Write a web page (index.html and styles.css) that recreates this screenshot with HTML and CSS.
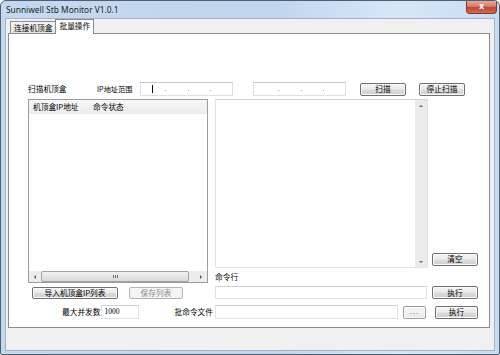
FILE: index.html
```html
<!DOCTYPE html>
<html lang="zh-CN">
<head>
    <meta charset="UTF-8">
    <title>Sunniwell Stb Monitor V1.0.1</title>
    <link rel="stylesheet" href="styles.css">
</head>
<body>

<div class="window">
    <div class="titlebar">
        <span class="title">Sunniwell Stb Monitor V1.0.1</span>
        <div class="close"><span>x</span></div>
    </div>

    <div class="client">
        <div class="tabs">
            <div class="tab">连接机顶盒</div>
            <div class="tab active">批量操作</div>
        </div>

        <div class="panel">
            <!-- 扫描行 -->
            <div class="scan-row">
                <span class="lbl scan-lbl">扫描机顶盒</span>
                <span class="lbl ip-lbl">IP地址范围</span>
                <div class="ip ip-from">
                    <span class="seg"><span class="caret"></span></span><span class="dot"></span>
                    <span class="seg"></span><span class="dot"></span>
                    <span class="seg"></span><span class="dot"></span>
                    <span class="seg"></span>
                </div>
                <div class="ip ip-to">
                    <span class="seg"></span><span class="dot"></span>
                    <span class="seg"></span><span class="dot"></span>
                    <span class="seg"></span><span class="dot"></span>
                    <span class="seg"></span>
                </div>
                <button class="btn btn-scan">扫描</button>
                <button class="btn btn-stop">停止扫描</button>
            </div>

            <div class="work">
                <!-- 机顶盒列表 -->
                <div class="listview">
                    <div class="lv-head">
                        <span class="col-ip">机顶盒IP地址</span>
                        <span class="col-state">命令状态</span>
                    </div>
                    <div class="lv-body"></div>
                    <div class="hscroll">
                        <span class="arrow"><i class="tri-left"></i></span>
                        <span class="thumb"><i class="grip"></i></span>
                        <span class="track"></span>
                        <span class="arrow"><i class="tri-right"></i></span>
                    </div>
                </div>

                <!-- 输出区 -->
                <div class="output">
                    <div class="out-text"></div>
                    <div class="vscroll">
                        <i class="tri-up"></i>
                        <i class="tri-down"></i>
                    </div>
                </div>
                <div class="side-clear">
                    <button class="btn btn-clear">清空</button>
                </div>

                <div class="cmd-lbl lbl">命令行</div>

                <div class="list-btns">
                    <button class="btn btn-import">导入机顶盒IP列表</button>
                    <button class="btn btn-save" disabled>保存列表</button>
                </div>
                <div class="cmd-cell">
                    <div class="field cmd-input"></div>
                </div>
                <div class="side-exec">
                    <button class="btn btn-exec">执行</button>
                </div>

                <div class="conc-cell">
                    <span class="lbl">最大并发数</span>
                    <div class="field conc-input">1000</div>
                    <span class="lbl batch-lbl">批命令文件</span>
                </div>
                <div class="file-cell">
                    <div class="field file-input"></div>
                    <button class="btn btn-browse">...</button>
                </div>
                <div class="side-batch">
                    <button class="btn btn-batch">执行</button>
                </div>
            </div>
        </div>
    </div>
</div>

</body>
</html>
```

FILE: styles.css
```css
body {
    margin: 0;
    padding: 0;
    background-color: #ffffff;
    font-family: "Noto Sans CJK SC", "Noto Sans", sans-serif;
}
.window {
    width: 500px;
    height: 355px;
    box-sizing: border-box;
    border: 1px solid #4f5f72;
    border-radius: 6px 6px 2px 2px;
    padding: 0 4px 3px 4px;
    background: linear-gradient(to right, #c4d9ef 0%, #c0d6ee 55%, #d6e7f8 80%, #c8dcf1 100%);
    overflow: hidden;
}
.titlebar {
    height: 17px;
    display: flex;
    align-items: flex-start;
}
.title {
    font-family: "Noto Sans", sans-serif;
    font-size: 8.4px;
    color: #1e1e1e;
    margin: 3px 0 0 1px;
    line-height: 11px;
}
.close {
    margin-left: auto;
    margin-right: -2px;
    width: 31px;
    height: 13px;
    box-sizing: border-box;
    border: 1px solid #7d3a30;
    border-top: none;
    border-radius: 0 0 4px 4px;
    background: linear-gradient(#e7a99c 0%, #d67a68 45%, #c2432f 55%, #d36a52 100%);
    display: flex;
    justify-content: center;
    align-items: center;
}
.close span {
    font-family: "DejaVu Sans", sans-serif;
    font-weight: bold;
    font-size: 8px;
    line-height: 8px;
    color: #ffffff;
    margin-top: -1px;
}
.client {
    height: 333px;
    box-sizing: border-box;
    border: 1px solid #9fb3ca;
    background-color: #f0f0f0;
}
.tabs {
    display: flex;
    align-items: flex-end;
    height: 14px;
    margin-left: 4px;
}
.tab {
    height: 12px;
    box-sizing: border-box;
    border: 1px solid #898c95;
    border-bottom: none;
    padding: 0 3px;
    font-size: 7.7px;
    line-height: 11px;
    background: linear-gradient(#f4f4f4, #e4e4e4);
    color: #000;
}
.tab.active {
    position: relative;
    z-index: 1;
    height: 15px;
    margin-bottom: -1px;
    margin-left: -1px;
    background: #ffffff;
    line-height: 12px;
}
.panel {
    margin-left: 2px;
    width: 482px;
    height: 295px;
    box-sizing: border-box;
    border: 1px solid #898c95;
    background-color: #ffffff;
    padding: 48px 0 0 19px;
}
.lbl {
    font-size: 7.7px;
    line-height: 10px;
    color: #000;
    white-space: nowrap;
}
.scan-row {
    display: flex;
    align-items: center;
    height: 14px;
}
.scan-lbl {
    width: 69px;
}
.ip-lbl {
    width: 43px;
    font-size: 7.2px;
}
.ip {
    width: 93px;
    height: 14px;
    box-sizing: border-box;
    border: 1px solid #dcdfe3;
    border-top-color: #c4c8cd;
    display: flex;
    align-items: center;
    padding-left: 4px;
}
.ip-from {
    margin-right: 20px;
}
.ip-to {
    margin-right: 14px;
}
.seg {
    width: 21px;
    height: 10px;
    display: flex;
    align-items: center;
}
.caret {
    width: 1px;
    height: 8px;
    margin-left: 7px;
    background-color: #000;
}
.dot {
    width: 1px;
    height: 1px;
    margin: 3px 1px 0 0;
    background-color: #9a9a9a;
}
.btn {
    height: 13px;
    box-sizing: border-box;
    border: 1px solid #707070;
    border-radius: 2px;
    background: linear-gradient(#f3f3f3 0%, #ebebeb 48%, #dcdcdc 52%, #cfcfcf 100%);
    font-family: "Noto Sans CJK SC", sans-serif;
    font-size: 7.7px;
    line-height: 10px;
    color: #000;
    padding: 0;
    box-shadow: inset 0 0 0 1px #fbfbfb;
}
.btn:disabled {
    border-color: #b1b5b9;
    background: #f4f4f4;
    color: #8b8b8b;
    box-shadow: none;
}
.btn-scan {
    width: 46px;
    margin-right: 13px;
}
.btn-stop {
    width: 46px;
}
.work {
    margin-top: 3px;
    display: grid;
    grid-template-columns: 187px 217px 46px;
    grid-template-rows: 169px 15px 19px 20px;
}
.listview {
    grid-column: 1;
    grid-row: 1 / 3;
    width: 180px;
    box-sizing: border-box;
    border: 1px solid #9c9c9c;
    display: flex;
    flex-direction: column;
}
.lv-head {
    height: 14px;
    display: flex;
    align-items: center;
    background: linear-gradient(#f7f7f7, #ececec);
    font-size: 7.7px;
    line-height: 10px;
}
.col-ip {
    width: 60px;
    padding-left: 4px;
}
.lv-body {
    flex: 1;
}
.hscroll {
    height: 11px;
    display: flex;
    background-color: #ececec;
}
.hscroll .arrow {
    width: 12px;
    display: flex;
    align-items: center;
    justify-content: center;
}
.thumb {
    width: 148px;
    box-sizing: border-box;
    border: 1px solid #a3a3a3;
    border-radius: 2px;
    background: linear-gradient(#f1f1f1, #d9d9d9);
    display: flex;
    align-items: center;
    justify-content: center;
}
.track {
    flex: 1;
}
.grip {
    width: 5px;
    height: 3px;
    background: repeating-linear-gradient(to right, #6f6f6f 0 1px, transparent 1px 2px);
}
.tri-left {
    border-right: 2px solid #555;
    border-top: 2px solid transparent;
    border-bottom: 2px solid transparent;
}
.tri-right {
    border-left: 2px solid #555;
    border-top: 2px solid transparent;
    border-bottom: 2px solid transparent;
}
.output {
    grid-column: 2;
    grid-row: 1;
    width: 213px;
    box-sizing: border-box;
    border: 1px solid #e2e3e5;
    border-top-color: #cfd1d4;
    display: flex;
}
.out-text {
    flex: 1;
}
.vscroll {
    width: 12px;
    background-color: #ebebeb;
    display: flex;
    flex-direction: column;
    align-items: center;
    justify-content: space-between;
    padding: 5px 0 4px;
}
.tri-up {
    border-bottom: 2px solid #666;
    border-left: 2px solid transparent;
    border-right: 2px solid transparent;
}
.tri-down {
    border-top: 2px solid #666;
    border-left: 2px solid transparent;
    border-right: 2px solid transparent;
}
.side-clear {
    grid-column: 3;
    grid-row: 1;
    align-self: end;
    margin-bottom: 1px;
}
.btn-clear, .btn-exec {
    width: 46px;
}
.cmd-lbl {
    grid-column: 2;
    grid-row: 2;
    align-self: center;
    margin-top: 2px;
}
.list-btns {
    grid-column: 1;
    grid-row: 3;
    display: flex;
    align-items: center;
    padding-left: 4px;
    gap: 11px;
}
.list-btns .btn {
    height: 12px;
}
.btn-import {
    width: 86px;
}
.btn-save {
    width: 54px;
}
.cmd-cell {
    grid-column: 2;
    grid-row: 3;
    display: flex;
    align-items: center;
}
.field {
    height: 13px;
    box-sizing: border-box;
    border: 1px solid #e0e2e5;
    border-top-color: #cdd0d4;
    background-color: #ffffff;
}
.cmd-input {
    width: 212px;
}
.side-exec {
    grid-column: 3;
    grid-row: 3;
    display: flex;
    align-items: center;
}
.conc-cell {
    grid-column: 1;
    grid-row: 4;
    display: flex;
    align-items: center;
    padding-left: 34px;
    padding-right: 2px;
}
.conc-input {
    width: 38px;
    height: 14px;
    margin-left: 1px;
    font-family: "Liberation Serif", serif;
    font-size: 7.5px;
    line-height: 12px;
    color: #000;
    padding-left: 2px;
}
.batch-lbl {
    margin-left: auto;
}
.file-cell {
    grid-column: 2;
    grid-row: 4;
    display: flex;
    align-items: center;
    gap: 5px;
}
.file-input {
    width: 183px;
    height: 14px;
}
.btn-browse {
    width: 23px;
    border-color: #9a9a9a;
    background: linear-gradient(#f7f7f7, #e9e9e9);
    font-family: "Liberation Sans", sans-serif;
    font-size: 7px;
    line-height: 8px;
    letter-spacing: 1px;
    color: #333;
}
.side-batch {
    grid-column: 3;
    grid-row: 4;
    display: flex;
    align-items: center;
    padding-left: 3px;
}
.btn-batch {
    width: 43px;
}
```
